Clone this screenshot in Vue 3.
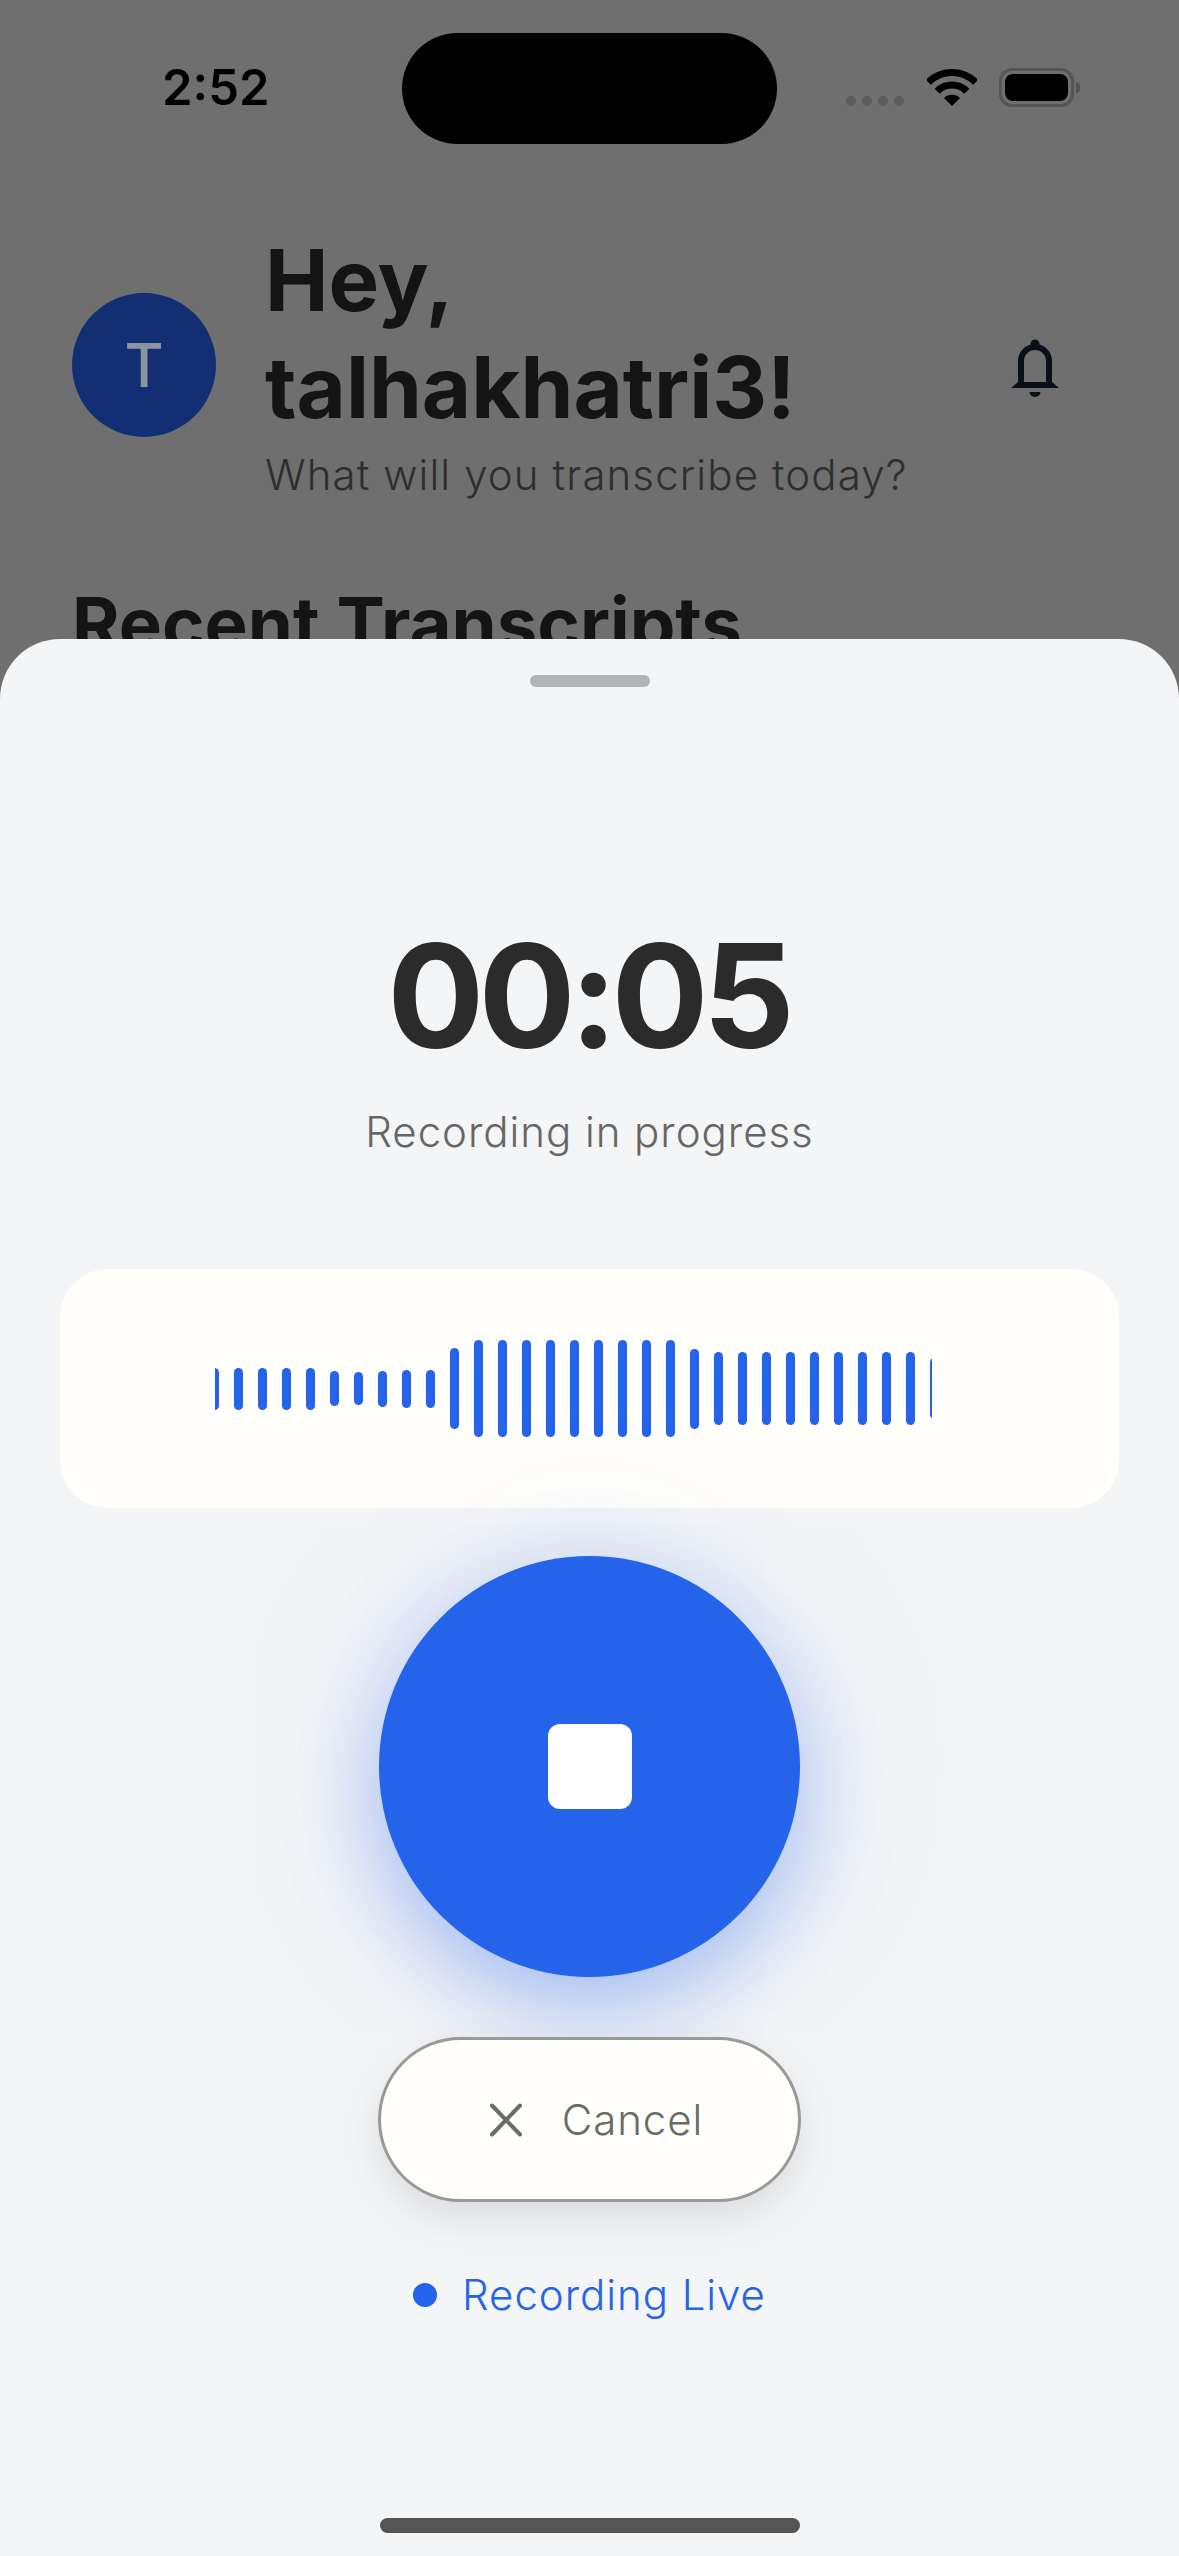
<script setup>
const barHeights = [
  42, 42, 42, 42, 42, 35, 33, 36, 38, 38,
  81, 97, 97, 97, 97, 97, 97, 97, 97, 97,
  80, 73, 73, 73, 73, 73, 73, 73, 73, 73, 61,
]
</script>

<template>
  <div class="screen">
    <div class="backdrop">
      <div class="status-bar">
        <span class="time">2:52</span>
        <div class="status-icons">
          <div class="signal">
            <span v-for="n in 4" :key="n" class="signal-dot" />
          </div>
          <svg class="wifi" width="50" height="37" viewBox="0 0 50 37" fill="none" stroke="#000" stroke-width="7">
            <path d="M1.3 13.3A33.5 33.5 0 0 1 48.7 13.3" />
            <path d="M10.2 22.2A21 21 0 0 1 39.8 22.2" />
            <path d="M25 37L17 29A11.3 11.3 0 0 1 33 29Z" fill="#000" stroke="none" />
          </svg>
          <div class="battery">
            <div class="battery-level" />
            <span class="battery-cap" />
          </div>
        </div>
      </div>

      <div class="greeting">
        <div class="avatar">T</div>
        <div class="greeting-text">
          <h1>Hey,<br />talhakhatri3!</h1>
          <p>What will you transcribe today?</p>
        </div>
        <svg class="bell" width="48" height="58" viewBox="0 0 48 58" fill="none">
          <circle cx="24" cy="5" r="4.5" fill="#0b0f1a" />
          <path d="M10 44V22A14 14 0 0 1 38 22V44" stroke="#0b0f1a" stroke-width="6" />
          <path d="M0 49L7 43H41L48 49Z" fill="#0b0f1a" />
          <path d="M18.5 53H29.5A5.5 5 0 0 1 18.5 53Z" fill="#0b0f1a" />
        </svg>
      </div>

      <h2 class="section-title">Recent Transcripts</h2>
    </div>

    <div class="dynamic-island" />

    <section class="sheet">
      <span class="handle" />
      <div class="timer">00:05</div>
      <div class="timer-label">Recording in progress</div>

      <div class="wave-card">
        <div class="wave">
          <span
            v-for="(h, i) in barHeights"
            :key="i"
            class="bar"
            :style="{ height: h + 'px' }"
          />
        </div>
      </div>

      <button class="stop-btn" type="button">
        <span class="stop-icon" />
      </button>

      <button class="cancel-btn" type="button">
        <svg width="32" height="34" viewBox="0 0 32 34" fill="none" stroke="#6b6b66" stroke-width="4" stroke-linecap="round">
          <path d="M2 2.5L30 31.5M30 2.5L2 31.5" />
        </svg>
        <span>Cancel</span>
      </button>

      <div class="live">
        <span class="live-dot" />
        <span>Recording Live</span>
      </div>

      <span class="home-indicator" />
    </section>
  </div>
</template>

<style scoped>
.screen {
  position: relative;
  width: 1179px;
  height: 2556px;
  overflow: hidden;
  background: #6f6f6f;
  font-family: Inter, "Liberation Sans", sans-serif;
}
.backdrop {
  display: flex;
  flex-direction: column;
}
.status-bar {
  display: flex;
  justify-content: space-between;
  height: 120px;
  padding: 58px 105px 0 162px;
  box-sizing: border-box;
}
.time {
  font-size: 49px;
  font-weight: 600;
  line-height: 60px;
  color: #000;
}
.status-icons {
  display: flex;
  align-items: flex-start;
  padding-top: 11px;
}
.signal {
  display: flex;
  gap: 6px;
  margin-top: 27px;
  margin-right: 23px;
}
.signal-dot {
  width: 10px;
  height: 10px;
  border-radius: 50%;
  background: #5c5c5c;
}
.wifi {
  margin-right: 22px;
}
.battery {
  position: relative;
  width: 75px;
  height: 39px;
  box-sizing: border-box;
  border: 3px solid #555;
  border-radius: 13px;
  padding: 3px;
  margin-top: -1px;
}
.battery-level {
  height: 100%;
  background: #000;
  border-radius: 8px;
}
.battery-cap {
  position: absolute;
  right: -9px;
  top: 11px;
  width: 4px;
  height: 11px;
  background: #555;
  border-radius: 0 6px 6px 0;
}
.greeting {
  display: flex;
  align-items: center;
  padding: 113px 120px 0 72px;
}
.avatar {
  flex: none;
  display: flex;
  align-items: center;
  justify-content: center;
  width: 144px;
  height: 144px;
  border-radius: 50%;
  background: #122f74;
  color: #8d93a0;
  font-size: 60px;
  font-weight: 500;
  margin: -6px 49px 0 0;
}
.greeting-text {
  flex: 1;
}
.greeting-text h1 {
  margin: -6px 0 0;
  font-size: 85px;
  font-weight: 700;
  line-height: 107px;
  color: #141414;
}
.greeting-text p {
  margin: 6px 0 0;
  font-size: 42px;
  font-weight: 350;
  line-height: 56px;
  color: #2e2e2e;
  letter-spacing: 1.1px;
}
.bell {
  flex: none;
}
.section-title {
  margin: 82px 0 0 72px;
  font-size: 72.5px;
  font-weight: 700;
  line-height: 78px;
  white-space: nowrap;
  color: #141414;
}
.dynamic-island {
  position: absolute;
  top: 33px;
  left: 402px;
  width: 375px;
  height: 111px;
  border-radius: 56px;
  background: #000;
}
.sheet {
  position: absolute;
  top: 639px;
  left: 0;
  right: 0;
  bottom: 0;
  display: flex;
  flex-direction: column;
  align-items: center;
  background: #f4f5f7;
  border-radius: 60px 60px 0 0;
}
.handle {
  width: 120px;
  height: 12px;
  margin-top: 36px;
  border-radius: 6px;
  background: #b0b3b8;
}
.timer {
  margin: 222px 3px 0 0;
  font-size: 144px;
  font-weight: 700;
  line-height: 174px;
  letter-spacing: -6px;
  color: #2b2b2b;
}
.timer-label {
  margin-top: 22px;
  font-size: 42px;
  font-weight: 350;
  line-height: 54px;
  color: #666;
  letter-spacing: 0.95px;
}
.wave-card {
  display: flex;
  align-items: center;
  box-sizing: border-box;
  width: 1059px;
  height: 239px;
  margin-top: 110px;
  padding-left: 155px;
  border-radius: 48px;
  background: #fffefb;
}
.wave {
  display: flex;
  align-items: center;
  gap: 15px;
  width: 717px;
  height: 150px;
  overflow: hidden;
}
.bar {
  flex: none;
  width: 9px;
  border-radius: 5px;
  background: #2563eb;
}
.bar:first-child {
  margin-left: -5px;
}
.stop-btn {
  display: flex;
  align-items: center;
  justify-content: center;
  width: 421px;
  height: 421px;
  margin-top: 48px;
  padding: 0;
  border: 0;
  border-radius: 50%;
  background: #2563eb;
  box-shadow: 0 28px 90px rgba(37, 99, 235, 0.38), 0 0 200px rgba(37, 99, 235, 0.08);
}
.stop-icon {
  width: 84px;
  height: 85px;
  border-radius: 12px;
  background: #fff;
}
.cancel-btn {
  display: flex;
  align-items: center;
  justify-content: center;
  gap: 40px;
  box-sizing: border-box;
  width: 423px;
  height: 165px;
  margin-top: 60px;
  padding: 0 0 0 14px;
  border: 3px solid #999;
  border-radius: 83px;
  background: #fffefb;
  box-shadow: 0 16px 44px rgba(0, 0, 0, 0.1);
  font-family: inherit;
  font-size: 42px;
  font-weight: 350;
  letter-spacing: 0.9px;
  color: #6b6b66;
}
.live {
  display: flex;
  align-items: center;
  gap: 25px;
  margin-top: 65px;
  font-size: 42px;
  font-weight: 350;
  line-height: 56px;
  letter-spacing: 0.95px;
  color: #2563eb;
}
.live-dot {
  width: 24px;
  height: 24px;
  border-radius: 50%;
  background: #2563eb;
}
.home-indicator {
  width: 420px;
  height: 15px;
  margin-top: auto;
  margin-bottom: 23px;
  border-radius: 8px;
  background: #555;
}
</style>

<style>
html, body {
  margin: 0;
  background: #6f6f6f;
}
</style>
